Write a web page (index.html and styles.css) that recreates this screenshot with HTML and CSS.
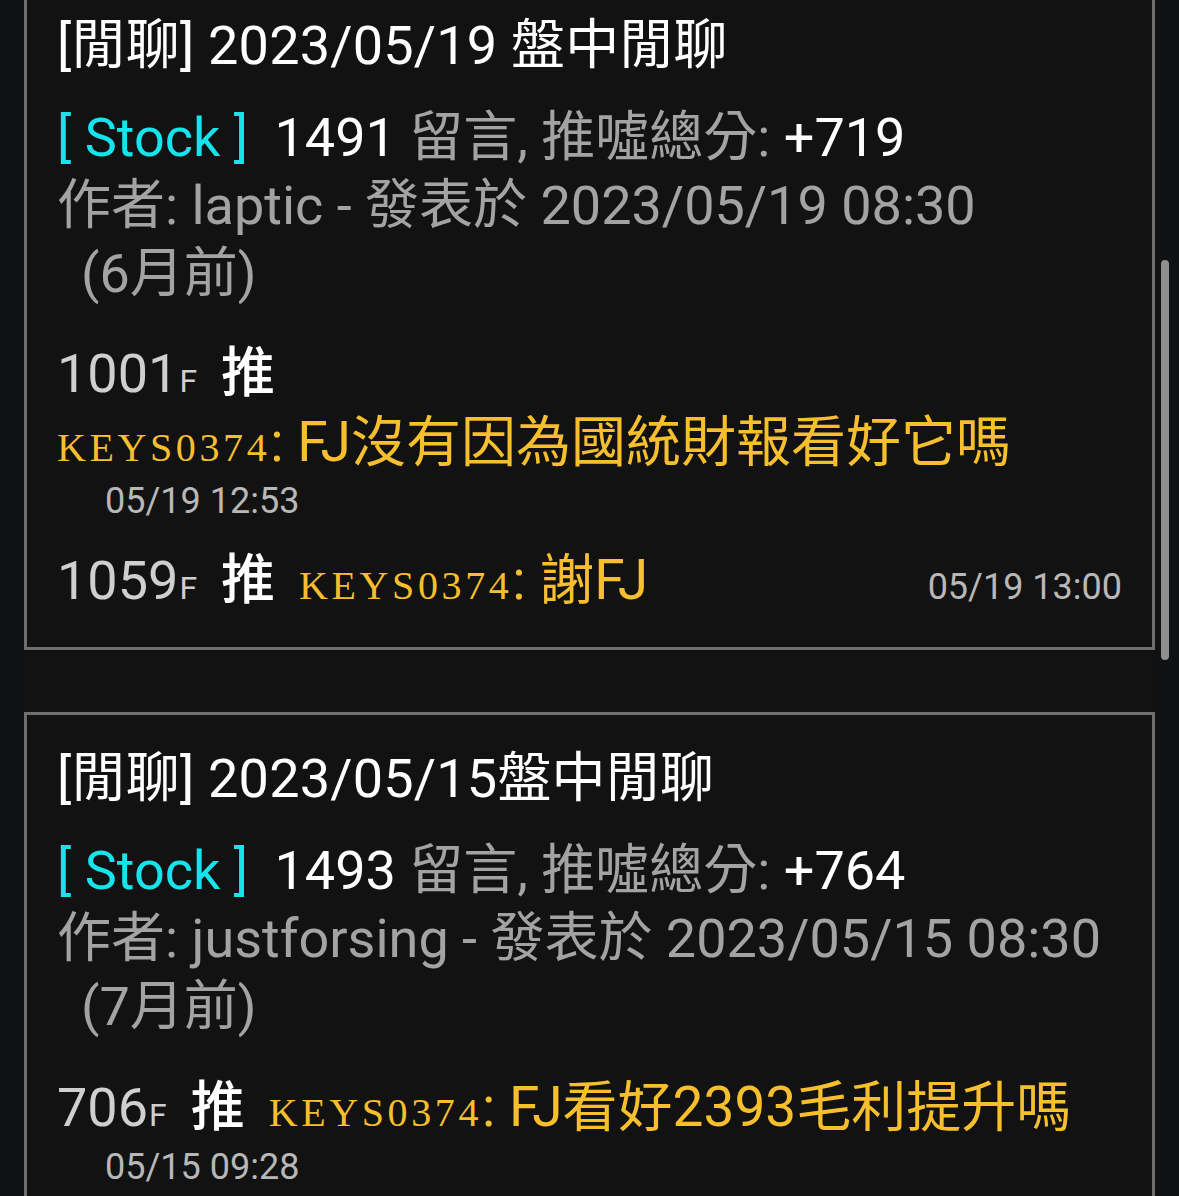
FILE: index.html
```html
<!DOCTYPE html>
<html lang="zh-Hant">

<head>
    <meta charset="UTF-8" />
    <meta name="viewport" content="width=device-width, initial-scale=1" />
    <title>PTT 推文</title>
    <link rel="stylesheet" href="styles.css">
</head>

<body>

    <div class="list">

        <article class="post">
            <h2 class="post-title">[閒聊] 2023/05/19 盤中閒聊</h2>
            <div class="post-meta">
                <div><span class="board">[ Stock ]</span> <span class="hl">1491</span> 留言, 推噓總分: <span class="hl">+719</span></div>
                <div>作者: laptic - 發表於 2023/05/19 08:30</div>
                <div class="ago">(6月前)</div>
            </div>
            <div class="comments">
                <div class="comment">
                    <span class="floor">1001<small>F</small></span>
                    <span class="tag">推</span>
                    <span class="body"><span class="user">KEYS0374</span>: FJ沒有因為國統財報看好它嗎</span>
                    <span class="time below">05/19 12:53</span>
                </div>
                <div class="comment">
                    <span class="floor">1059<small>F</small></span>
                    <span class="tag">推</span>
                    <span class="body"><span class="user">KEYS0374</span>: 謝FJ</span>
                    <span class="time">05/19 13:00</span>
                </div>
            </div>
        </article>

        <article class="post">
            <h2 class="post-title">[閒聊] 2023/05/15盤中閒聊</h2>
            <div class="post-meta">
                <div><span class="board">[ Stock ]</span> <span class="hl">1493</span> 留言, 推噓總分: <span class="hl">+764</span></div>
                <div>作者: justforsing - 發表於 2023/05/15 08:30</div>
                <div class="ago">(7月前)</div>
            </div>
            <div class="comments">
                <div class="comment">
                    <span class="floor">706<small>F</small></span>
                    <span class="tag">推</span>
                    <span class="body"><span class="user">KEYS0374</span>: FJ看好2393毛利提升嗎</span>
                    <span class="time below">05/15 09:28</span>
                </div>
            </div>
        </article>

    </div>

    <div class="scrollbar"></div>

</body>

</html>
```

FILE: styles.css
```css
html,
body {
    margin: 0;
    height: 100%;
    overflow: hidden;
}

body {
    background: #101113;
    font-family: Roboto, "Noto Sans CJK TC", sans-serif;
    font-size: 54px;
    line-height: 68px;
    color: #a3a3a3;
    padding: 0 24px;
    position: relative;
}

.list {
    background: #121212;
    margin-top: -21px;
    min-height: 1300px;
    display: flex;
    flex-direction: column;
    gap: 62px;
}

.post {
    border: 3px solid #6f6f6f;
    padding: 30px 30px 32px;
}

.post-title {
    margin: 0 0 24px;
    font-size: 54px;
    font-weight: normal;
    color: #fff;
    letter-spacing: 0.2px;
}

.board {
    color: #17e3ec;
    margin-right: 13px;
}

.hl {
    color: #fff;
}

.ago {
    padding-left: 24px;
}

.comments {
    margin-top: 32px;
    display: flex;
    flex-direction: column;
    gap: 20px;
}

.comment {
    display: flex;
    flex-wrap: wrap;
    align-items: baseline;
    column-gap: 24px;
}

.floor {
    color: #cfcfcf;
}

.floor small {
    font-size: 32px;
    line-height: 1;
    margin-left: 1px;
}

.tag {
    color: #fff;
    font-weight: 500;
}

.body {
    color: #f7bf2d;
    font-size: 55px;
}

.user {
    font-family: "Liberation Serif", serif;
    font-size: 40px;
    line-height: 1;
    letter-spacing: 3.6px;
}

.time {
    margin-left: auto;
    font-size: 36px;
    line-height: 50px;
    color: #b8b8b8;
}

.time.below {
    margin-left: 0;
    flex-basis: 100%;
    padding-left: 48px;
}

.scrollbar {
    position: absolute;
    top: 260px;
    right: 10px;
    width: 8px;
    height: 400px;
    border-radius: 4px;
    background: #8f8f8f;
}
```
